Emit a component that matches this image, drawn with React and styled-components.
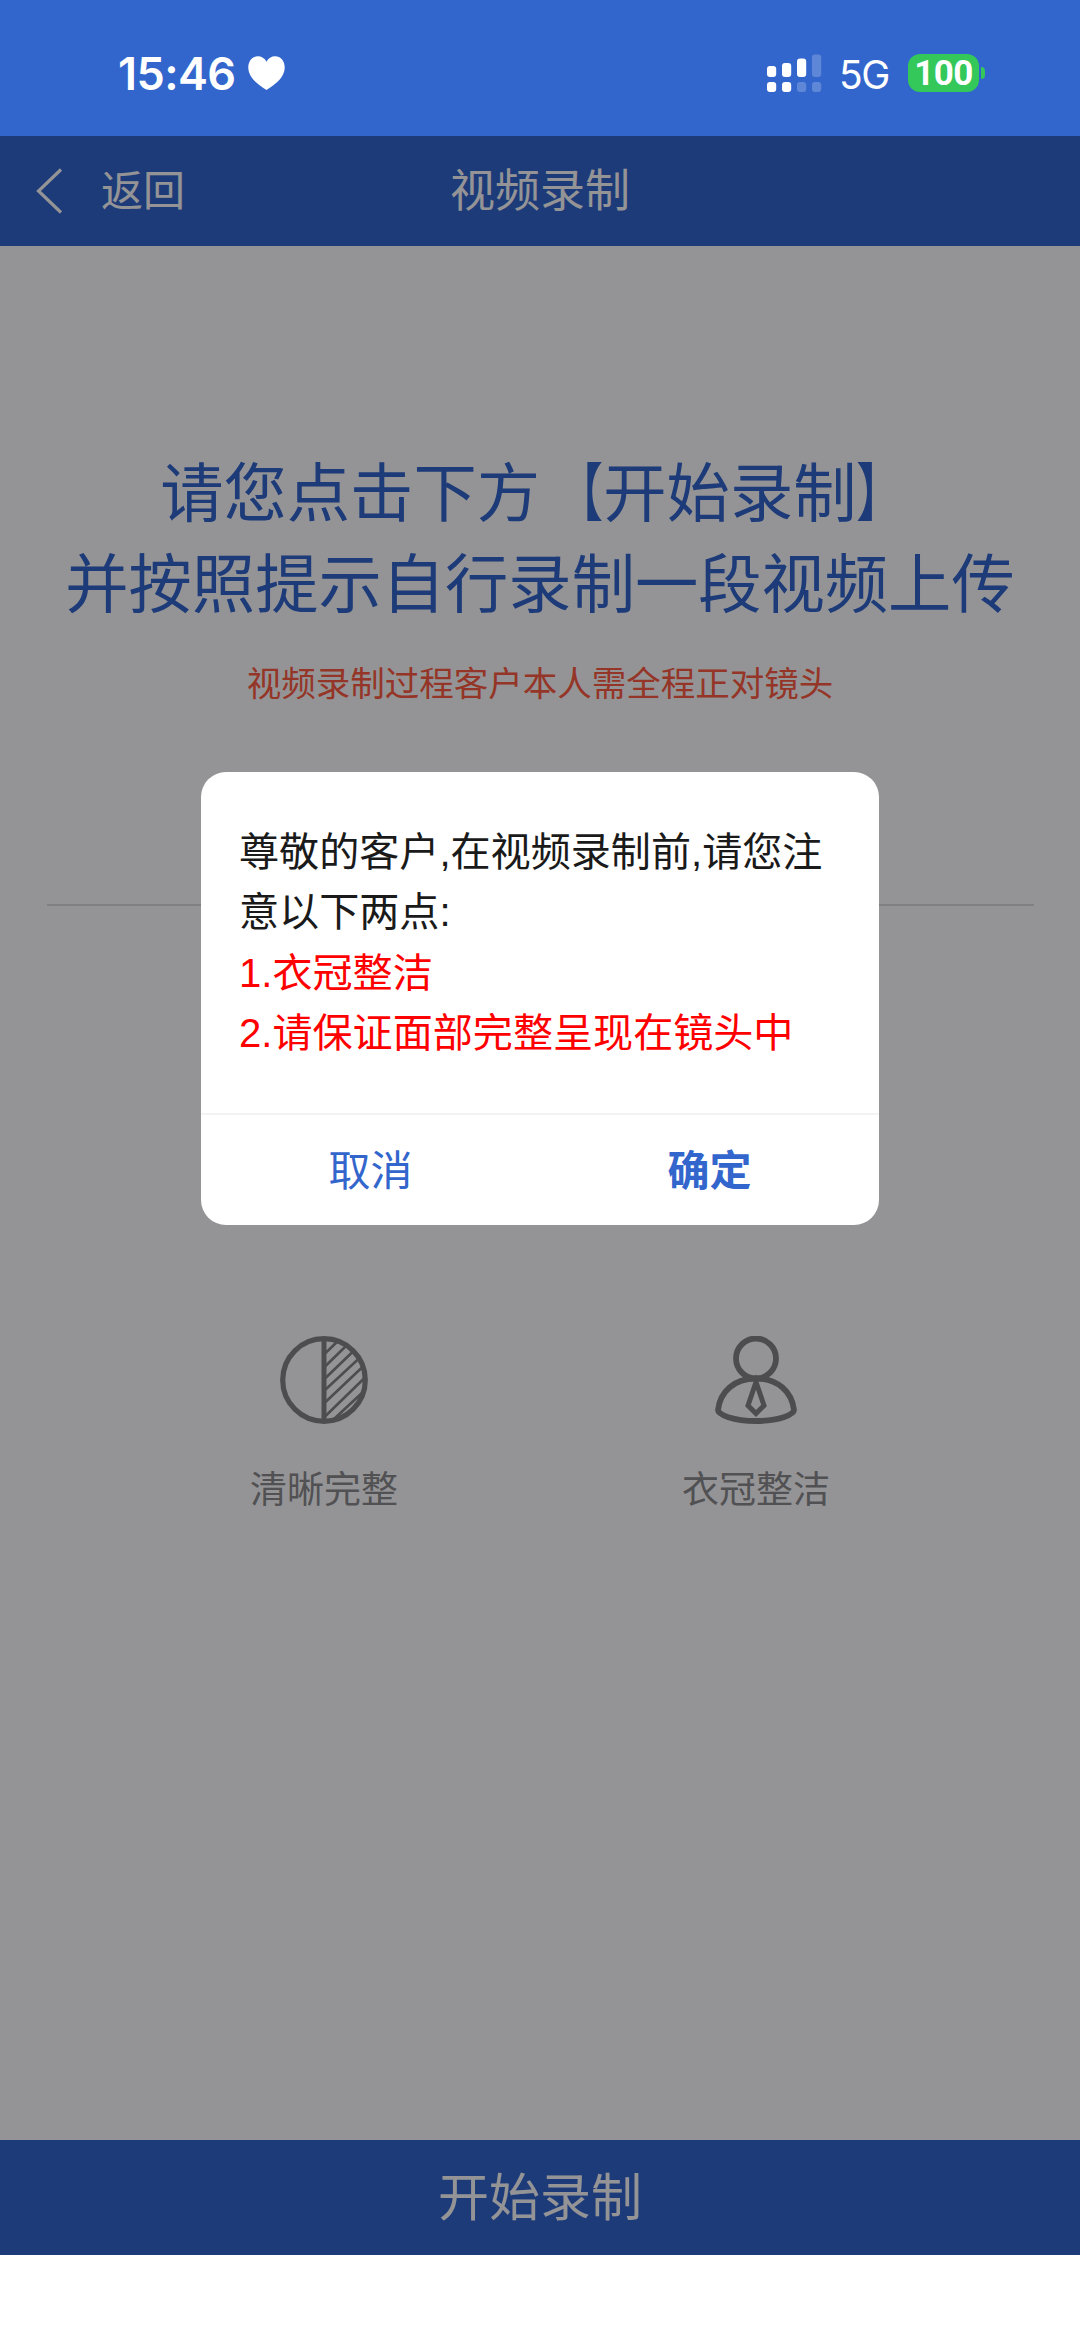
import React, { useState } from 'react';
import styled, { createGlobalStyle } from 'styled-components';

const GlobalStyle = createGlobalStyle`
  * {
    box-sizing: border-box;
  }

  body {
    margin: 0;
    background: #fff;
    font-family: 'Liberation Sans', 'Noto Sans CJK SC', sans-serif;
  }

  button {
    padding: 0;
    border: none;
    background: none;
    font-family: inherit;
    cursor: pointer;
  }
`;

const Screen = styled.div`
  width: 1080px;
  height: 2341px;
  display: flex;
  flex-direction: column;
  background: #fff;
  overflow: hidden;
`;

const StatusBar = styled.div`
  height: 136px;
  padding: 10px 95px 0 118px;
  display: flex;
  align-items: center;
  justify-content: space-between;
  background: #3366cc;
  color: #fff;
  font-family: Inter, sans-serif;
`;

const StatusGroup = styled.div`
  display: flex;
  align-items: center;
`;

const Time = styled.span`
  width: 130px;
  padding-top: 2px;
  font-size: 45px;
  line-height: 54px;
  font-weight: 600;
  letter-spacing: -0.6px;
  white-space: nowrap;
`;

const Network = styled.span`
  width: 69px;
  margin-left: 17px;
  padding-top: 4px;
  font-size: 39px;
  line-height: 46px;
  font-weight: 400;
  letter-spacing: -1.5px;
`;

const Battery = styled.span`
  width: 71px;
  height: 38px;
  margin-right: 2px;
  border-radius: 12px;
  background: #34c759;
  font-family: Roboto, sans-serif;
  font-size: 35px;
  line-height: 39px;
  font-weight: 700;
  letter-spacing: -0.6px;
  text-align: center;
`;

const BatteryTip = styled.span`
  width: 4px;
  height: 12px;
  border-radius: 0 4px 4px 0;
  background: #34c759;
`;

const View = styled.div`
  position: relative;
  height: 2119px;
  display: flex;
  flex-direction: column;
`;

const NavBar = styled.div`
  height: 110px;
  display: grid;
  grid-template-columns: 1fr auto 1fr;
  align-items: center;
  background: #3366cc;
  color: #fff;
`;

const BackButton = styled.button`
  display: flex;
  align-items: center;
  gap: 38px;
  padding-left: 36px;
  color: #fff;
  font-size: 42px;
  line-height: 60px;
`;

const BackLabel = styled.span`
  padding-top: 2px;
`;

const NavTitle = styled.div`
  padding-top: 2px;
  font-size: 45px;
  line-height: 60px;
`;

const Content = styled.div`
  flex: 1;
  padding-top: 203px;
  background: #fff;
`;

const Headline = styled.h1`
  margin: 0;
  color: #3366cc;
  font-size: 63.3px;
  line-height: 90.5px;
  font-weight: 400;
  text-align: center;
  white-space: nowrap;
`;

const Bracket = styled.span`
  display: inline-block;
  transform: scaleX(0.75);
  transform-origin: ${props => props.side} center;
`;

const Warning = styled.p`
  margin: 28px 0 0;
  color: #ff5c40;
  font-size: 34.5px;
  line-height: 52px;
  text-align: center;
`;

const Divider = styled.div`
  height: 2px;
  margin: 194px 46px 0 47px;
  background: #dcdcdc;
`;

const Tips = styled.div`
  display: grid;
  grid-template-columns: 1fr 1fr;
  margin-top: 430px;
  padding: 0 108px;
`;

const Tip = styled.div`
  display: flex;
  flex-direction: column;
  align-items: center;
  gap: 39px;
  color: #8c8c8c;
  font-size: 37px;
  line-height: 56px;
`;

const StartButton = styled.button`
  height: 115px;
  background: #3366cc;
  color: #fff;
  font-size: 51px;
  line-height: 117px;
`;

const Overlay = styled.div`
  position: absolute;
  top: 0;
  left: 0;
  right: 0;
  bottom: 0;
  display: flex;
  justify-content: center;
  align-items: flex-start;
  padding-top: 636px;
  background: rgba(0, 0, 4, 0.42);
`;

const Dialog = styled.div`
  width: 678px;
  height: 453px;
  display: flex;
  flex-direction: column;
  border-radius: 25px;
  background: #fff;
`;

const DialogBody = styled.div`
  flex: 1;
  padding: 50px 38px 0;
  color: #1a1a1a;
  font-size: 40.1px;
  line-height: 60.3px;
`;

const Notice = styled.div`
  color: ${props => props.danger ? '#ff0000' : 'inherit'};
  white-space: nowrap;
`;

const DialogActions = styled.div`
  height: 112px;
  display: flex;
  border-top: 2px solid #f3f3f3;
`;

const ActionButton = styled.button`
  flex: 1;
  padding-top: 3px;
  color: #3366cc;
  font-size: 42px;
  line-height: 107px;
  font-weight: ${props => props.primary ? 700 : 400};
`;

const HeartIcon = () => (
  <svg width="37" height="34" viewBox="0 0 37 34">
    <path
      d="M18.5 34C14.5 31 0.3 23.5 0.3 11.4C0.3 4.8 4.5 0.3 9.8 0.3C13.6 0.3 16.6 2.3 18.5 5.7C20.4 2.3 23.4 0.3 27.2 0.3C32.5 0.3 36.7 4.8 36.7 11.4C36.7 23.5 22.5 31 18.5 34Z"
      fill="#fff"
    />
  </svg>
);

// Dual-SIM signal: bars for the first line, dots for the second
const SignalIcon = () => (
  <svg width="55" height="38" viewBox="0 0 55 38" fill="#fff">
    <rect x="0" y="12" width="9.2" height="11" rx="3" />
    <rect x="15" y="9" width="9.2" height="14" rx="3" />
    <rect x="30" y="4.5" width="9.2" height="18.5" rx="3" />
    <rect x="45" y="0.5" width="9.2" height="22.5" rx="3" opacity="0.22" />
    <rect x="0" y="28" width="9.2" height="10" rx="3" />
    <rect x="15" y="28" width="9.2" height="10" rx="3" />
    <rect x="30" y="28" width="9.2" height="10" rx="3" opacity="0.22" />
    <rect x="45" y="28" width="9.2" height="10" rx="3" opacity="0.22" />
  </svg>
);

const BackIcon = () => (
  <svg width="27" height="46" viewBox="0 0 27 46" fill="none" stroke="#fff" strokeWidth="3.2">
    <path d="M25 1.5L2.5 23L25 44.5" />
  </svg>
);

const ContrastIcon = () => (
  <svg width="88" height="88" viewBox="0 0 88 88" fill="none" stroke="#868686">
    <circle cx="44" cy="44" r="41.3" strokeWidth="5.2" />
    <path d="M44 2V86" strokeWidth="5" />
    <path
      d="M45 17.5L58 5M45 30.5L66 10M45 42.5L73.5 15M45 54L79.5 22M45 66.5L83 30.5M45 80.5L85 41.5M54 83L83 56"
      strokeWidth="2.6"
    />
  </svg>
);

const PersonIcon = () => (
  <svg width="88" height="88" viewBox="0 0 88 88" fill="none" stroke="#868686" strokeWidth="5.8">
    <circle cx="44" cy="22.5" r="20" />
    <path d="M44 42.5C22 42.5 8 56 6 74C5.8 78.5 21 85 44 85C67 85 82.2 78.5 82 74C80 56 66 42.5 44 42.5Z" strokeLinejoin="round" />
    <path d="M44 46L36 69.5L44 77.5L52 69.5Z" strokeWidth="5" />
  </svg>
);

const App = () => {
  const [dialogOpen, setDialogOpen] = useState(true);

  const closeDialog = () => setDialogOpen(false);

  return (
    <>
      <GlobalStyle />
      <Screen>
        <StatusBar>
          <StatusGroup>
            <Time>15:46</Time>
            <HeartIcon />
          </StatusGroup>
          <StatusGroup>
            <SignalIcon />
            <Network>5G</Network>
            <Battery>100</Battery>
            <BatteryTip />
          </StatusGroup>
        </StatusBar>

        <View>
          <NavBar>
            <BackButton type="button">
              <BackIcon />
              <BackLabel>返回</BackLabel>
            </BackButton>
            <NavTitle>视频录制</NavTitle>
          </NavBar>

          <Content>
            <Headline>
              请您点击下方<Bracket side="right">【</Bracket>开始录制<Bracket side="left">】</Bracket>
              <br />
              并按照提示自行录制一段视频上传
            </Headline>
            <Warning>视频录制过程客户本人需全程正对镜头</Warning>
            <Divider />
            <Tips>
              <Tip>
                <ContrastIcon />
                清晰完整
              </Tip>
              <Tip>
                <PersonIcon />
                衣冠整洁
              </Tip>
            </Tips>
          </Content>

          <StartButton type="button" onClick={() => setDialogOpen(true)}>
            开始录制
          </StartButton>

          {dialogOpen && (
            <Overlay>
              <Dialog role="dialog">
                <DialogBody>
                  <Notice>
                    尊敬的客户,在视频录制前,请您注
                    <br />
                    意以下两点:
                  </Notice>
                  <Notice danger>1.衣冠整洁</Notice>
                  <Notice danger>2.请保证面部完整呈现在镜头中</Notice>
                </DialogBody>
                <DialogActions>
                  <ActionButton type="button" onClick={closeDialog}>取消</ActionButton>
                  <ActionButton type="button" primary onClick={closeDialog}>确定</ActionButton>
                </DialogActions>
              </Dialog>
            </Overlay>
          )}
        </View>
      </Screen>
    </>
  );
};

export default App;
